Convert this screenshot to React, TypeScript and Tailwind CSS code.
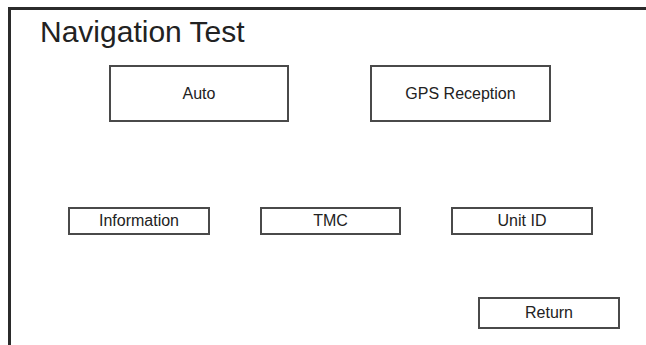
import React from "react";

function Box({ label, className }: { label: string; className: string }) {
  return (
    <div
      className={
        "flex items-center justify-center border-2 border-[#4a4a4a] bg-white text-[16px] leading-none text-[#222] " +
        className
      }
    >
      {label}
    </div>
  );
}

export default function App() {
  return (
    <div
      className="w-[646px] h-[345px] overflow-hidden bg-white pl-[8px] pt-[7px]"
      style={{ fontFamily: '"Liberation Sans", Arial, sans-serif' }}
    >
      <div className="w-[720px] h-[400px] border-l-[3px] border-t-[3px] border-r-0 border-b-0 border-[#2b2b2b] flex flex-col items-start">
        <h1 className="ml-[29px] mt-[5px] text-[30px] leading-[34px] text-[#222] font-normal">
          Navigation Test
        </h1>
        <div className="mt-[16px] ml-[98px] flex gap-[81px]">
          <Box label="Auto" className="w-[180px] h-[57px]" />
          <Box label="GPS Reception" className="w-[181px] h-[57px]" />
        </div>
        <div className="mt-[85px] ml-[57px] flex gap-[50px]">
          <Box label="Information" className="w-[142px] h-[28px]" />
          <Box label="TMC" className="w-[141px] h-[28px]" />
          <Box label="Unit ID" className="w-[142px] h-[28px]" />
        </div>
        <div className="mt-[62px] ml-[467px]">
          <Box label="Return" className="w-[142px] h-[32px]" />
        </div>
      </div>
    </div>
  );
}
